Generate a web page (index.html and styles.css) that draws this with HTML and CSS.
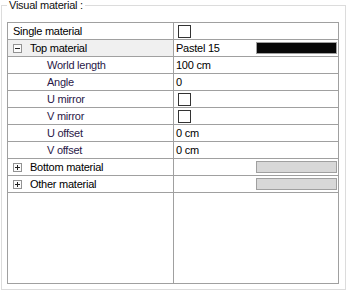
FILE: index.html
```html
<!DOCTYPE html>
<html>
<head>
<meta charset="utf-8">
<link rel="stylesheet" href="styles.css">
</head>
<body>
<div class="group">
  <span class="title">Visual material :</span>
  <div class="grid">
    <div class="row">
      <div class="name lvl0">Single material</div>
      <div class="val"><span class="check"></span></div>
    </div>
    <div class="row">
      <div class="name lvl0 sel"><span class="exp minus"></span>Top material</div>
      <div class="val"><span class="txt">Pastel 15</span><span class="swatch black"></span></div>
    </div>
    <div class="row">
      <div class="name lvl1">World length</div>
      <div class="val"><span class="txt">100 cm</span></div>
    </div>
    <div class="row">
      <div class="name lvl1">Angle</div>
      <div class="val"><span class="txt">0</span></div>
    </div>
    <div class="row">
      <div class="name lvl1">U mirror</div>
      <div class="val"><span class="check"></span></div>
    </div>
    <div class="row">
      <div class="name lvl1">V mirror</div>
      <div class="val"><span class="check"></span></div>
    </div>
    <div class="row">
      <div class="name lvl1">U offset</div>
      <div class="val"><span class="txt">0 cm</span></div>
    </div>
    <div class="row">
      <div class="name lvl1">V offset</div>
      <div class="val"><span class="txt">0 cm</span></div>
    </div>
    <div class="row">
      <div class="name lvl0"><span class="exp plus"></span>Bottom material</div>
      <div class="val"><span class="swatch gray"></span></div>
    </div>
    <div class="row">
      <div class="name lvl0"><span class="exp plus"></span>Other material</div>
      <div class="val"><span class="swatch gray"></span></div>
    </div>
    <div class="filler">
      <div class="fill-left"></div>
    </div>
  </div>
</div>
</body>
</html>
```
FILE: styles.css
```css
html, body {
  margin: 0;
  padding: 0;
  background: #ffffff;
}
body {
  font-family: "Liberation Sans", Arial, sans-serif;
  font-size: 11px;
  letter-spacing: -0.25px;
  color: #000;
}
.group {
  position: relative;
  box-sizing: border-box;
  width: 345px;
  height: 285px;
  margin: 5px 0 0 1px;
  border: 1px solid #dcdcdc;
  padding: 16px 6px 5px 5px;
}
.title {
  position: absolute;
  top: -8px;
  left: 5px;
  padding: 0 2px 0 2px;
  background: #fff;
  line-height: 14px;
  color: #111;
}
.grid {
  box-sizing: border-box;
  height: 262px;
  border: 1px solid #a0a0a0;
  display: flex;
  flex-direction: column;
}
.row {
  display: flex;
  height: 16px;
  border-bottom: 1px solid #a0a0a0;
  flex: none;
}
.name {
  box-sizing: border-box;
  width: 166px;
  border-right: 1px solid #a0a0a0;
  line-height: 16px;
  display: flex;
  align-items: center;
  white-space: nowrap;
}
.lvl0 { padding-left: 5px; }
.lvl1 { padding-left: 39px; color: #2a1848; }
.sel { background: #f0f0f0; }
.exp {
  box-sizing: border-box;
  position: relative;
  width: 9px;
  height: 9px;
  border: 1px solid #929292;
  background: #fbfbfb;
  margin-right: 8px;
  flex: none;
}
.exp::before {
  content: "";
  position: absolute;
  left: 1px;
  top: 3px;
  width: 5px;
  height: 1px;
  background: #222;
}
.plus::after {
  content: "";
  position: absolute;
  left: 3px;
  top: 1px;
  width: 1px;
  height: 5px;
  background: #222;
}
.val {
  flex: 1;
  display: flex;
  align-items: center;
  line-height: 16px;
  position: relative;
}
.txt {
  padding-left: 2px;
}
.check {
  box-sizing: border-box;
  width: 13px;
  height: 13px;
  border: 1px solid #333;
  background: #fff;
  margin-left: 4px;
}
.swatch {
  box-sizing: border-box;
  width: 81px;
  height: 12px;
  margin-left: auto;
  margin-right: 1px;
  border: 1px solid #a0a0a0;
}
.black { background: #080808; }
.gray { background: #d8d8d8; }
.filler {
  flex: 1;
  display: flex;
}
.fill-left {
  box-sizing: border-box;
  width: 166px;
  border-right: 1px solid #a0a0a0;
}
```
